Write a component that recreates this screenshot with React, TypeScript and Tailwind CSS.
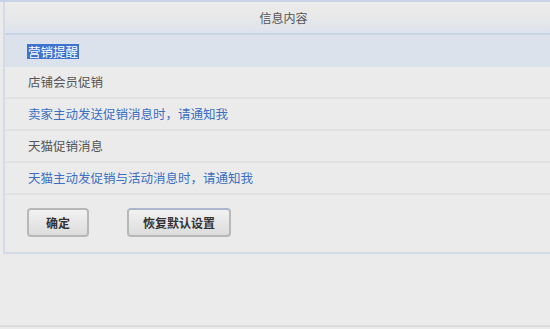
import React from 'react';

const rows = [
  { text: '店铺会员促销', link: false },
  { text: '卖家主动发送促销消息时，请通知我', link: true },
  { text: '天猫促销消息', link: false },
  { text: '天猫主动发促销与活动消息时，请通知我', link: true },
];

const font = { fontFamily: '"Noto Sans CJK SC", "Liberation Sans", sans-serif' };

const App: React.FC = () => {
  return (
    <div className="w-[550px] h-[329px] bg-[#ebebeb] overflow-hidden flex flex-col" style={font}>
      <div className="h-[2px] bg-[#c9d3e6]" />
      <div className="ml-[3px] h-[252px] border-l-2 border-b-2 border-[#d3dbe6] flex flex-col">
        {/* header */}
        <div className="h-[33px] pl-[12px] border-b-2 border-[#c8d4e6] bg-gradient-to-b from-[#ececec] via-[#e8e8e8] to-[#dce3ee] flex items-center justify-center">
          <span className="text-[12px] text-[#555]">信息内容</span>
        </div>

        {/* section title */}
        <div className="h-[32px] bg-[#dce2ec] flex items-center pl-[22px]">
          <span className="bg-[#3d72cf] text-white text-[12.5px] leading-[15px] px-[1px]">营销提醒</span>
        </div>

        {rows.map((r, i) => (
          <div
            key={i}
            className="h-[32px] border-b-2 border-[#e2e2e2] flex items-center pl-[23px]"
          >
            <span className={`text-[12.5px] ${r.link ? 'text-[#3b6fc2]' : 'text-[#555]'}`}>{r.text}</span>
          </div>
        ))}

        {/* buttons */}
        <div className="flex items-center gap-[38px] pl-[22px] pt-[13px]">
          <button className="w-[62px] h-[29px] rounded-[4px] border-2 border-[#b8b8b8] bg-gradient-to-b from-[#f2f2f2] to-[#dcdcdc] text-[12px] font-bold text-[#333]">
            确定
          </button>
          <button className="w-[104px] h-[29px] rounded-[4px] border-2 border-[#b8b8b8] border-t-[#a9b6cc] bg-gradient-to-b from-[#f2f2f2] to-[#dcdcdc] text-[12px] font-bold text-[#333]">
            恢复默认设置
          </button>
        </div>
      </div>
      <div className="flex-1" />
      <div className="h-[2px] mb-[2px] bg-[#dcdcdc]" />
    </div>
  );
};

export default App;
